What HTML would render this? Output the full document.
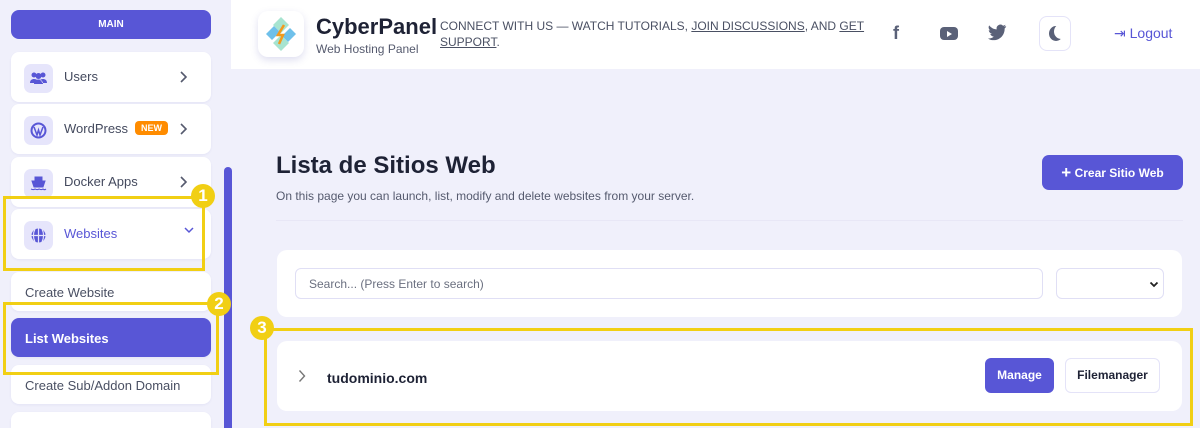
<!DOCTYPE html>
<html><head><meta charset="utf-8"><style>
*{box-sizing:border-box;margin:0;padding:0}
html,body{width:1200px;height:428px;overflow:hidden}
body{background:#f0f0fb;font-family:"Liberation Sans",sans-serif;position:relative;color:#1e2235}
.a{position:absolute}
.card{position:absolute;background:#fff;border-radius:8px;left:11px;width:200px;box-shadow:0 1px 2px rgba(90,90,180,.08)}
.mi{height:50px}
.ic{position:absolute;left:13px;top:12px;width:29px;height:29px;border-radius:7px;background:#e6e5fb}
.lbl{position:absolute;left:53px;top:17px;font-size:13px;color:#444a5e}
.chev{position:absolute;left:168px;top:18px}
.sub{height:39px;font-size:13px;color:#4a5063;padding:13px 14px}
.yb{position:absolute;border:3px solid #f1cf14}
.yc{position:absolute;width:24px;height:24px;border-radius:50%;background:#f1cf14;color:#fff;font-weight:bold;font-size:17px;text-align:center;line-height:24px}
</style></head><body>
<div class="a" style="left:11px;top:10px;width:200px;height:29px;background:#5856d6;border-radius:8px;color:#fff;font-size:10px;font-weight:bold;text-align:center;line-height:29px">MAIN</div>
<div class="card mi" style="top:52px"><div class="ic"><svg width="29" height="29" viewBox="0 0 29 29"><g fill="#5856d6"><circle cx="10" cy="11" r="2.5"/><circle cx="19" cy="11" r="2.5"/><circle cx="14.5" cy="12" r="3"/><path d="M6 19c0-3 2-4 4-4s3 1 3 1-2 1-2 3zM23 19c0-3-2-4-4-4s-3 1-3 1 2 1 2 3zM10 20c0-3 2-4.5 4.5-4.5S19 17 19 20z"/></g></svg></div><div class="lbl">Users</div><svg class="chev" width="10" height="14" viewBox="0 0 10 14"><path d="M2 2l5 5-5 5" stroke="#555a6e" stroke-width="1.6" fill="none"/></svg></div>
<div class="card mi" style="top:104px"><div class="ic"><svg width="29" height="29" viewBox="0 0 29 29"><circle cx="14.5" cy="14.5" r="7" fill="none" stroke="#5856d6" stroke-width="2"/><path d="M10 11l3 8 1.5-5 1.5 5 3-8" stroke="#5856d6" stroke-width="1.5" fill="none"/></svg></div><div class="lbl">WordPress</div><div class="a" style="left:124px;top:17px;background:#ff8c00;color:#fff;font-size:9px;font-weight:bold;border-radius:4px;padding:2px 6px">NEW</div><svg class="chev" width="10" height="14" viewBox="0 0 10 14"><path d="M2 2l5 5-5 5" stroke="#555a6e" stroke-width="1.6" fill="none"/></svg></div>
<div class="card mi" style="top:157px"><div class="ic"><svg width="29" height="29" viewBox="0 0 29 29"><path d="M11 8h7v3h-7zM8 12h13l-2 6h-9zM7 20c2 1 3 1 4 0 2 1 3 1 4 0 2 1 3 1 4 0 1 1 2 1 3 0" fill="#5856d6" stroke="#5856d6" stroke-width="1"/></svg></div><div class="lbl">Docker Apps</div><svg class="chev" width="10" height="14" viewBox="0 0 10 14"><path d="M2 2l5 5-5 5" stroke="#555a6e" stroke-width="1.6" fill="none"/></svg></div>
<div class="card mi" style="top:209px"><div class="ic"><svg width="29" height="29" viewBox="0 0 29 29"><circle cx="14.5" cy="14.5" r="7" fill="#5856d6"/><path d="M7.5 14.5h14M14.5 7.5v14M11 8c-2 4-2 9 0 13M18 8c2 4 2 9 0 13" stroke="#e6e5fb" stroke-width="1.2" fill="none"/></svg></div><div class="lbl" style="color:#5856d6">Websites</div><svg class="a" style="left:172px;top:17px" width="12" height="8" viewBox="0 0 12 8"><path d="M2 2l4 4 4-4" stroke="#5856d6" stroke-width="1.5" fill="none"/></svg></div>
<div class="card sub" style="top:272px">Create Website</div>
<div class="card sub" style="top:318px;background:#5856d6;color:#fff;font-weight:bold">List Websites</div>
<div class="card sub" style="top:365px">Create Sub/Addon Domain</div>
<div class="card" style="top:412px;height:16px;border-radius:8px 8px 0 0"></div>
<div class="a" style="left:224px;top:167px;width:8px;height:261px;background:#5856d6;border-radius:4px 4px 0 0"></div>
<div class="a" style="left:231px;top:0;width:969px;height:69px;background:#fff"></div>
<div class="a" style="left:258px;top:11px;width:46px;height:46px;border-radius:10px;background:#fff;box-shadow:0 3px 8px rgba(90,90,180,.2)"><svg width="46" height="46" viewBox="0 0 46 46"><path d="M23 6l8 8-8 8-8-8z" fill="#a7e4d0"/><path d="M8 23l8-8 6 6-8 8z" fill="#6fc0ea"/><path d="M38 23l-8 8-6-6 8-8z" fill="#6fc0ea"/><path d="M23 40l-8-8 8-8 8 8z" fill="#a7e4d0"/><path d="M26 14l-6 10h5l-4 9" stroke="#f39a1e" stroke-width="2.5" fill="none"/></svg></div>
<div class="a" style="left:316px;top:14px;font-size:22px;font-weight:bold;color:#1e2235">CyberPanel</div>
<div class="a" style="left:316px;top:42px;font-size:12px;color:#555a6e">Web Hosting Panel</div>
<div class="a" style="left:440px;top:18px;width:430px;font-size:12px;line-height:16px;color:#4a5063">CONNECT WITH US — WATCH TUTORIALS, <u>JOIN DISCUSSIONS</u>, AND <u>GET SUPPORT</u>.</div>
<div class="a" style="left:893px;top:23px;font-size:18px;font-weight:bold;color:#5a6178">f</div>
<div class="a" style="left:940px;top:27px;width:18px;height:13px;background:#5a6178;border-radius:4px"><div class="a" style="left:7px;top:3.5px;border-left:5px solid #fff;border-top:3px solid transparent;border-bottom:3px solid transparent"></div></div>
<svg class="a" style="left:988px;top:24px" width="19" height="17" viewBox="0 0 24 20"><path d="M23 2c-1 .5-2 .7-3 .8 1-.6 2-1.6 2-2.6-1 .6-2 1-3 1.2A4.8 4.8 0 0 0 11 6C7 6 4 4 1.5 1c-1.5 2.5-.5 5 1.5 6.5-1 0-1.5-.3-2-.6 0 2.3 1.6 4.3 4 4.8-.8.2-1.5.2-2.2.1.6 2 2.4 3.3 4.5 3.4C5 17 3 17.7 0 17.5 2 19 4.5 19.7 7 19.7c9 0 14-7.5 14-14V5c1-.7 1.7-1.5 2-3z" fill="#5a6178"/></svg>
<div class="a" style="left:1039px;top:16px;width:32px;height:35px;border:1px solid #e4e3f8;border-radius:8px"><div class="a" style="left:9px;top:9px;width:14px;height:15px;border-radius:50%;background:#5a6178"></div><div class="a" style="left:14px;top:7px;width:14px;height:15px;border-radius:50%;background:#fff"></div></div>
<div class="a" style="left:1114px;top:25px;font-size:14px;color:#5856d6">⇥ Logout</div>
<div class="a" style="left:276px;top:152px;font-size:24px;font-weight:bold;color:#1e2235">Lista de Sitios Web</div>
<div class="a" style="left:276px;top:189px;font-size:12px;color:#555a6e">On this page you can launch, list, modify and delete websites from your server.</div>
<div class="a" style="left:1042px;top:155px;width:141px;height:35px;background:#5856d6;border-radius:7px;color:#fff;font-size:12px;font-weight:bold;text-align:center;line-height:35px"><span style="font-size:17px;vertical-align:-1px">+</span> Crear Sitio Web</div>
<div class="a" style="left:276px;top:220px;width:907px;height:1px;background:#e8e7f6"></div>
<div class="a" style="left:277px;top:250px;width:905px;height:67px;background:#fff;border-radius:10px"></div>
<div class="a" style="left:295px;top:268px;width:748px;height:31px;border:1px solid #e0dff5;border-radius:6px;font-size:12px;color:#6b7080;padding:8px 13px">Search... (Press Enter to search)</div>
<div class="a" style="left:1056px;top:268px;width:108px;height:31px;border:1px solid #e0dff5;border-radius:6px"><svg class="a" style="left:92px;top:12px" width="10" height="7" viewBox="0 0 10 7"><path d="M1.5 1.5l3.5 3.5 3.5-3.5" stroke="#222" stroke-width="1.8" fill="none"/></svg></div>
<div class="a" style="left:277px;top:341px;width:905px;height:70px;background:#fff;border-radius:10px"></div>
<svg class="a" style="left:298px;top:369px" width="8" height="14" viewBox="0 0 8 14"><path d="M1.5 1.5l5 5.5-5 5.5" stroke="#777" stroke-width="1.4" fill="none"/></svg>
<div class="a" style="left:327px;top:370px;font-size:14px;font-weight:bold;color:#1e2235">tudominio.com</div>
<div class="a" style="left:985px;top:358px;width:69px;height:35px;background:#5856d6;border-radius:6px;color:#fff;font-size:12px;font-weight:bold;text-align:center;line-height:35px">Manage</div>
<div class="a" style="left:1065px;top:358px;width:95px;height:35px;border:1px solid #e4e3f8;border-radius:6px;color:#1e2235;font-size:12px;font-weight:bold;text-align:center;line-height:33px">Filemanager</div>
<div class="yb" style="left:3px;top:196px;width:202px;height:75px"></div>
<div class="yc" style="left:191px;top:184px">1</div>
<div class="yb" style="left:3px;top:302px;width:216px;height:73px"></div>
<div class="yc" style="left:207px;top:292px">2</div>
<div class="yb" style="left:264px;top:328px;width:929px;height:98px"></div>
<div class="yc" style="left:250px;top:316px">3</div>
</body></html>
